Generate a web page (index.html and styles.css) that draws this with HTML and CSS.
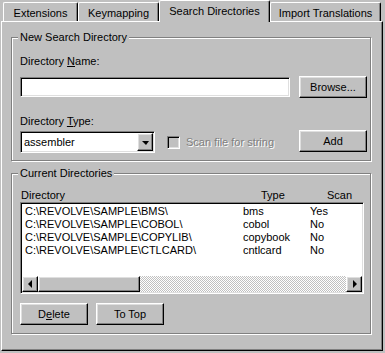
FILE: index.html
```html
<!DOCTYPE html>
<html><head>
<meta charset="utf-8">
<title>Search Directories</title>
<link rel="stylesheet" href="styles.css">
</head>
<body>
<div class="tabs">
	<div class="tab tab-ext">Extensions</div>
	<div class="tab tab-key">Keymapping</div>
	<div class="tab tab-sel">Search Directories</div>
	<div class="tab tab-imp">Import Translations</div>
</div>
<div class="panel">
	<div class="group group-new">
		<span class="group-title">New Search Directory</span>
		<div class="label">Directory <u>N</u>ame:</div>
		<div class="row row-name">
			<div class="edit sunken"></div>
			<div class="button">Browse...</div>
		</div>
		<div class="label label-type">Directory <u>T</u>ype:</div>
		<div class="row row-type">
			<div class="combo sunken">
				<span class="combo-text">assembler</span>
				<span class="raised combo-btn"><span class="arrow-down"></span></span>
			</div>
			<div class="check disabled"><span class="checkbox sunken"></span>Scan file for string</div>
			<div class="button">Add</div>
		</div>
	</div>
	<div class="group group-cur">
		<span class="group-title">Current Directories</span>
		<div class="list-head">
			<span>Directory</span>
			<span>Type</span>
			<span>Scan</span>
		</div>
		<div class="list sunken">
			<div class="rows">
				<div class="item"><span>C:\REVOLVE\SAMPLE\BMS\</span><span>bms</span><span>Yes</span></div>
				<div class="item"><span>C:\REVOLVE\SAMPLE\COBOL\</span><span>cobol</span><span>No</span></div>
				<div class="item"><span>C:\REVOLVE\SAMPLE\COPYLIB\</span><span>copybook</span><span>No</span></div>
				<div class="item"><span>C:\REVOLVE\SAMPLE\CTLCARD\</span><span>cntlcard</span><span>No</span></div>
			</div>
			<div class="hscroll">
				<span class="raised sb-btn"><span class="arrow-left"></span></span>
				<span class="raised sb-thumb"></span>
				<span class="sb-track"></span>
				<span class="raised sb-btn"><span class="arrow-right"></span></span>
			</div>
		</div>
		<div class="actions">
			<div class="button">D<u>e</u>lete</div>
			<div class="button">To Top</div>
		</div>
	</div>
</div>
</body>
</html>
```
FILE: styles.css
```css
* { box-sizing: border-box; }
body {
    margin: 0;
    width: 385px;
    height: 353px;
    overflow: hidden;
    background: #c0c0c0;
    color: #000;
    font-family: "Liberation Sans", Arial, sans-serif;
    font-size: 11px;
    line-height: 13px;
}
u { text-underline-offset: 1px; }

/* tab strip */
.tabs {
    display: flex;
    align-items: flex-end;
    height: 21px;
    padding-left: 3px;
}
.tab {
    height: 19px;
    padding-top: 4px;
    text-align: center;
    white-space: nowrap;
    border-top: 1px solid #fff;
    border-left: 1px solid #fff;
    border-right: 1px solid #000;
    border-radius: 2px 2px 0 0;
    box-shadow: inset -1px 0 #808080;
}
.tab-ext { width: 75px; }
.tab-key { width: 81px; }
.tab-sel {
    width: 111px;
    height: 22px;
    margin-bottom: -1px;
    position: relative;
    z-index: 1;
    background: #c0c0c0;
}
.tab-imp { width: 111px; }

.panel {
    margin-left: 1px;
    width: 382px;
    height: 330px;
    padding: 15px 0 0 9px;
    border: 1px solid;
    border-color: #fff #000 #000 #fff;
    box-shadow: inset -1px -1px #808080;
}

/* 3d bits */
.sunken {
    border: 1px solid;
    border-color: #808080 #fff #fff #808080;
    box-shadow: inset 1px 1px #000, inset -1px -1px #dfdfdf;
    padding: 1px;
    background: #fff;
}
.raised, .button {
    border: 1px solid;
    border-color: #fff #000 #000 #fff;
    box-shadow: inset -1px -1px #808080, inset 1px 1px #dfdfdf;
    background: #c0c0c0;
}
.button {
    width: 68px;
    height: 22px;
    display: flex;
    align-items: center;
    justify-content: center;
}

/* group boxes */
.group {
    position: relative;
    width: 360px;
    padding: 17px 3px 7px 8px;
    border: 1px solid #808080;
    box-shadow: inset 1px 1px #fff, 1px 1px #fff;
}
.group-title {
    position: absolute;
    top: -7px;
    left: 6px;
    padding: 0 2px;
    background: #c0c0c0;
}
.group-cur {
    margin-top: 12px;
    padding-top: 15px;
    padding-bottom: 8px;
}

.row {
    display: flex;
    align-items: center;
}
.row-name {
    height: 22px;
    margin-top: 8px;
    justify-content: space-between;
}
.edit {
    width: 270px;
    height: 20px;
}
.label-type { margin-top: 17px; }
.row-type {
    height: 23px;
    margin-top: 2px;
    align-items: flex-start;
}
.combo {
    width: 135px;
    height: 22px;
    margin-top: 1px;
    display: flex;
}
.combo-text {
    flex: 1;
    padding: 3px 0 0 2px;
}
.combo-btn {
    width: 16px;
    display: flex;
    align-items: center;
    justify-content: center;
}
.arrow-down {
    width: 0;
    height: 0;
    border-left: 4px solid transparent;
    border-right: 3px solid transparent;
    border-top: 4px solid #000;
    margin-top: 1px;
}
.check {
    display: flex;
    align-items: center;
    height: 20px;
    margin: 2px 0 0 12px;
}
.checkbox {
    width: 13px;
    height: 13px;
    margin-right: 6px;
    background: #c0c0c0;
}
.disabled {
    color: #808080;
    text-shadow: 1px 1px 0 #fff;
}
.row-type .button { margin-left: auto; }

/* list view */
.list-head {
    display: grid;
    grid-template-columns: 240px 66px auto;
    padding-left: 1px;
}
.list {
    width: 344px;
    height: 92px;
    display: flex;
    flex-direction: column;
}
.rows {
    flex: 1;
    padding: 1px 0 0 3px;
}
.item {
    display: grid;
    grid-template-columns: 218px 67px auto;
    white-space: nowrap;
}
.hscroll {
    display: flex;
    height: 16px;
}
.sb-btn {
    width: 16px;
    display: flex;
    align-items: center;
    justify-content: center;
}
.sb-thumb { width: 102px; }
.sb-track {
    flex: 1;
    background: repeating-conic-gradient(#fff 0 25%, #c0c0c0 0 50%) 0 0 / 2px 2px;
}
.arrow-left, .arrow-right {
    width: 0;
    height: 0;
    border-top: 4px solid transparent;
    border-bottom: 4px solid transparent;
}
.arrow-left { border-right: 4px solid #000; margin-left: -1px; }
.arrow-right { border-left: 4px solid #000; margin-left: 1px; }

.actions {
    display: flex;
    gap: 8px;
    margin-top: 9px;
}
```
